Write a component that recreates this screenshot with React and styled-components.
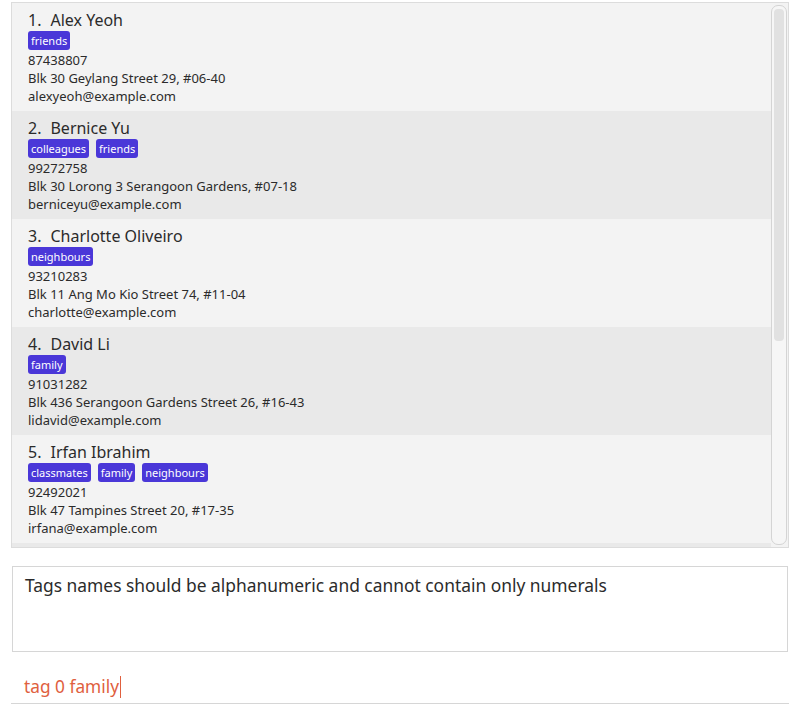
import React from "react";
import styled, { createGlobalStyle } from "styled-components";

const GlobalStyle = createGlobalStyle`
  body {
    margin: 0;
    background: #ffffff;
    font-family: "Noto Sans", "Open Sans", sans-serif;
    color: #2b2b2b;
  }
`;

const persons = [
  { name: "Alex Yeoh", tags: ["friends"], phone: "87438807", address: "Blk 30 Geylang Street 29, #06-40", email: "alexyeoh@example.com" },
  { name: "Bernice Yu", tags: ["colleagues", "friends"], phone: "99272758", address: "Blk 30 Lorong 3 Serangoon Gardens, #07-18", email: "berniceyu@example.com" },
  { name: "Charlotte Oliveiro", tags: ["neighbours"], phone: "93210283", address: "Blk 11 Ang Mo Kio Street 74, #11-04", email: "charlotte@example.com" },
  { name: "David Li", tags: ["family"], phone: "91031282", address: "Blk 436 Serangoon Gardens Street 26, #16-43", email: "lidavid@example.com" },
  { name: "Irfan Ibrahim", tags: ["classmates", "family", "neighbours"], phone: "92492021", address: "Blk 47 Tampines Street 20, #17-35", email: "irfana@example.com" },
  { name: "Roy Balakrishnan", tags: ["colleagues"], phone: "92624417", address: "Blk 45 Aljunied Street 85, #11-31", email: "royb@example.com" },
];

const Page = styled.div`
  padding: 2px 7px 0 11px;
  display: flex;
  flex-direction: column;
`;

const ListPanel = styled.div`
  height: 544px;
  border: 1px solid #dcdcdc;
  display: flex;
  overflow: hidden;
  background: #f3f3f3;
`;

const Rows = styled.div`
  flex: 1;
  overflow: hidden;
`;

const Row = styled.div`
  height: 108px;
  box-sizing: border-box;
  padding: 6px 16px 0;
  background: ${(p) => (p.$odd ? "#e9e9e9" : "#f3f3f3")};
`;

const NameLine = styled.div`
  display: flex;
  gap: 9px;
  font-size: 16px;
  line-height: 22px;
  color: #2b2b2b;
`;

const TagRow = styled.div`
  display: flex;
  gap: 7px;
  height: 20px;
  align-items: flex-start;
`;

const Tag = styled.span`
  background: #4a37d8;
  color: #ffffff;
  font-size: 11px;
  line-height: 19px;
  padding: 0 3px;
  border-radius: 3px;
`;

const Detail = styled.div`
  font-size: 13px;
  line-height: 18px;
  color: #2b2b2b;
`;

const ScrollTrack = styled.div`
  width: 17px;
  flex: none;
  padding: 2px 1px 2px 0;
  box-sizing: border-box;
  background: #f3f3f3;
  display: flex;
`;

const ScrollGroove = styled.div`
  flex: 1;
  border: 1px solid #d4d4d4;
  border-radius: 7px;
  background: #f6f6f6;
  padding: 3px 2px;
`;

const ScrollThumb = styled.div`
  height: 332px;
  border-radius: 4px;
  background: #e1e1e1;
`;

const ResultBox = styled.div`
  margin-top: 18px;
  margin-left: 1px;
  margin-right: 1px;
  height: 86px;
  box-sizing: border-box;
  border: 1px solid #d6d6d6;
  padding: 6px 12px;
  font-size: 17.4px;
  line-height: 24px;
  color: #2b2b2b;
`;

const CommandBox = styled.div`
  margin-top: 18px;
  height: 33px;
  border-bottom: 1px solid #d6d6d6;
  padding-left: 13px;
  display: flex;
  align-items: center;
  font-size: 17.3px;
  color: #e0603e;
`;

const Caret = styled.span`
  display: inline-block;
  width: 1px;
  height: 22px;
  background: #e0603e;
  margin-left: 1px;
`;

export default function App() {
  return (
    <>
      <GlobalStyle />
      <Page>
        <ListPanel>
          <Rows>
            {persons.map((p, i) => (
              <Row key={p.name} $odd={i % 2 === 1}>
                <NameLine>
                  <span>{i + 1}.</span>
                  <span>{p.name}</span>
                </NameLine>
                <TagRow>
                  {p.tags.map((t) => (
                    <Tag key={t}>{t}</Tag>
                  ))}
                </TagRow>
                <Detail>{p.phone}</Detail>
                <Detail>{p.address}</Detail>
                <Detail>{p.email}</Detail>
              </Row>
            ))}
          </Rows>
          <ScrollTrack>
            <ScrollGroove>
              <ScrollThumb />
            </ScrollGroove>
          </ScrollTrack>
        </ListPanel>
        <ResultBox>Tags names should be alphanumeric and cannot contain only numerals</ResultBox>
        <CommandBox>
          tag 0 family
          <Caret />
        </CommandBox>
      </Page>
    </>
  );
}
